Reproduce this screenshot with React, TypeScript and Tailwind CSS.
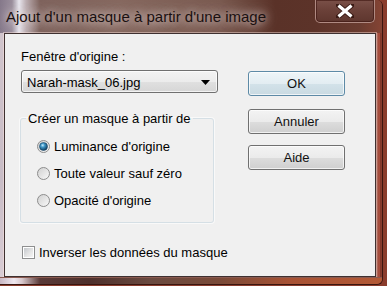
import React from "react";

function Radio({ checked }: { checked?: boolean }) {
  return (
    <svg width="13" height="13" viewBox="0 0 13 13" className="shrink-0">
      <defs>
        <linearGradient id="rbg" x1="0" y1="0" x2="1" y2="1">
          <stop offset="0" stopColor="#cfcfcf" />
          <stop offset="1" stopColor="#fafafa" />
        </linearGradient>
        <radialGradient id="rdot" cx="0.4" cy="0.35" r="0.7">
          <stop offset="0" stopColor="#c6ecff" />
          <stop offset="0.35" stopColor="#3d96c6" />
          <stop offset="1" stopColor="#0b3354" />
        </radialGradient>
      </defs>
      <circle cx="6.5" cy="6.5" r="6" fill="url(#rbg)" stroke="#8d8d8d" />
      {checked && <circle cx="6.5" cy="6.5" r="4" fill="url(#rdot)" stroke="#1d4a6a" strokeWidth="0.6" />}
    </svg>
  );
}

function Checkbox() {
  return (
    <div className="w-[13px] h-[13px] border border-[#8e8f8f] bg-white p-px shrink-0">
      <div className="w-full h-full bg-[linear-gradient(135deg,#c4c8cc_0%,#e6e6e6_60%,#f4f4f4_100%)]" />
    </div>
  );
}

function Btn({ label, primary }: { label: string; primary?: boolean }) {
  return (
    <div
      className={
        "h-[25px] w-[97px] rounded-[3px] border flex items-center justify-center shadow-[inset_0_0_0_1px_rgba(255,255,255,0.7)] " +
        (primary
          ? "border-[#5d8aa6] bg-[linear-gradient(180deg,#eef5f8_0%,#e3edf2_50%,#d3e2e9_51%,#c9dae2_100%)]"
          : "border-[#707070] bg-[linear-gradient(180deg,#f3f3f3_0%,#ebebeb_50%,#dddddd_51%,#cfcfcf_100%)]")
      }
    >
      <span className="text-[#111]">{label}</span>
    </div>
  );
}

export default function App() {
  return (
    <div className="w-[387px] h-[286px] overflow-hidden bg-[#8a3c2c] font-['Liberation_Sans',Arial,sans-serif] text-[13px] leading-[15px] text-black">
      <div className="w-[383px] h-[285px] flex flex-col rounded-tr-[6px] rounded-br-[6px] border-r border-b border-[#3a1610] overflow-hidden">
        {/* title bar */}
        <div className="h-[33px] shrink-0 flex items-start bg-[linear-gradient(90deg,#85788a_0px,#9a8e9c_12px,#e8e6ee_19px,#bcaeb2_26px,#7e625c_40px,#86685f_120px,#7a5a50_220px,#5a3228_275px,#5c3329_315px,#6a3c30_360px,#864434_383px)]">
          <div className="pl-[6px] pt-[8px] text-[15px] leading-[18px] text-[#1a1010] [text-shadow:0_0_8px_rgba(235,222,222,0.95),0_0_14px_rgba(235,222,222,0.8)]">
            Ajout d'un masque à partir d'une image
          </div>
          <div className="ml-auto mr-[7px] w-[60px] h-[23px] rounded-b-[5px] border border-t-0 border-[#b08a82] shadow-[inset_0_0_0_1px_rgba(60,20,15,0.6)] bg-[linear-gradient(180deg,#7a5048_0%,#6a4038_50%,#5e362e_100%)] flex items-center justify-center">
            <svg width="18" height="14" viewBox="0 0 18 14">
              <path d="M2 1 L16 13 M16 1 L2 13" stroke="#3a1a14" strokeWidth="5" strokeLinecap="square" />
              <path d="M2.5 1.5 L15.5 12.5 M15.5 1.5 L2.5 12.5" stroke="#ffffff" strokeWidth="3.2" strokeLinecap="butt" />
            </svg>
          </div>
        </div>

        {/* main row */}
        <div className="h-[244px] shrink-0 flex">
          <div className="w-[4px] bg-[linear-gradient(180deg,#d0c4cc_0%,#c8bcc6_60%,#d8ccd4_100%)]" />
          <div className="w-[372px] border border-[#3e3030] bg-[#f0f0f0] shadow-[0_0_0_1px_rgba(255,230,225,0.45)] flex">
            {/* left column */}
            <div className="pl-[16px] pt-[15px] w-[213px] shrink-0 flex flex-col whitespace-nowrap">
              <div>Fenêtre d'origine :</div>
              <div className="mt-[6px] h-[23px] w-[197px] rounded-[3px] border border-[#707070] shadow-[inset_0_0_0_1px_rgba(255,255,255,0.7)] bg-[linear-gradient(180deg,#f3f3f3_0%,#ececec_50%,#e0e0e0_51%,#d6d6d6_100%)] flex items-center pl-[5px] pr-[7px] pt-px">
                <span>Narah-mask_06.jpg</span>
                <svg className="ml-auto" width="9" height="5" viewBox="0 0 9 5">
                  <path d="M0 0 H9 L4.5 5 Z" fill="#000" />
                </svg>
              </div>
              <fieldset className="mt-[18px] -ml-px w-[194px] border border-[#d5dfe5] rounded-[3px] p-0 shadow-[0_0_0_1px_rgba(255,255,255,0.6)]">
                <legend className="ml-[5px] px-[2px]">Créer un masque à partir de</legend>
                <div className="pl-[16px] pt-[7px] pb-[8px]">
                  <div className="h-[27px] flex items-center gap-[4px]">
                    <Radio checked />
                    <span>Luminance d'origine</span>
                  </div>
                  <div className="h-[27px] flex items-center gap-[4px]">
                    <Radio />
                    <span>Toute valeur sauf zéro</span>
                  </div>
                  <div className="h-[27px] flex items-center gap-[4px]">
                    <Radio />
                    <span>Opacité d'origine</span>
                  </div>
                </div>
              </fieldset>
              <div className="mt-[22px] ml-[1px] flex items-center gap-[4px]">
                <Checkbox />
                <span>Inverser les données du masque</span>
              </div>
            </div>
            {/* right column */}
            <div className="ml-[30px] pt-[37px] flex flex-col">
              <Btn label="OK" primary />
              <div className="mt-[13px]">
                <Btn label="Annuler" />
              </div>
              <div className="mt-[11px]">
                <Btn label="Aide" />
              </div>
            </div>
          </div>
          <div className="flex-1 bg-[linear-gradient(90deg,#d8b8b0_0px,#a24c3c_2px,#a84e3c_4px,#5a2016_5px,#b05644_6px,#a04a38_7px)]" />
        </div>

        {/* bottom frame */}
        <div className="flex-1 bg-[linear-gradient(90deg,#c8b8c4_0px,#efe8f0_14px,#d8c8cc_22px,#5a3a38_40px,#4e302c_90px,#6a4a40_150px,#7a4a38_220px,#a85234_290px,#b45a36_383px)] border-t border-[#8a5a50]" />
      </div>
    </div>
  );
}
